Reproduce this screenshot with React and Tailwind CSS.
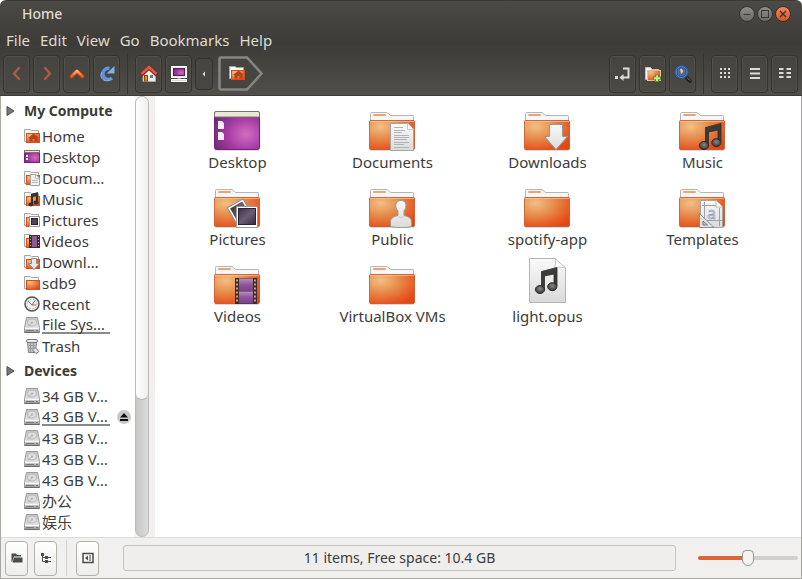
import React, { useState } from "react";

const places = [
  { name: "Home", kind: "home" },
  { name: "Desktop", kind: "desktop" },
  { name: "Docum…", kind: "documents" },
  { name: "Music", kind: "music" },
  { name: "Pictures", kind: "pictures" },
  { name: "Videos", kind: "videos" },
  { name: "Downl…", kind: "downloads" },
  { name: "sdb9", kind: "folder" },
  { name: "Recent", kind: "recent" },
  { name: "File Sys…", kind: "drive", mounted: true },
  { name: "Trash", kind: "trash" },
];

const devices = [
  { name: "34 GB V…", kind: "drive" },
  { name: "43 GB V…", kind: "drive", mounted: true, eject: true },
  { name: "43 GB V…", kind: "drive" },
  { name: "43 GB V…", kind: "drive" },
  { name: "43 GB V…", kind: "drive" },
  { name: "办公", kind: "drive" },
  { name: "娱乐", kind: "drive" },
];

const files = [
  { name: "Desktop", kind: "desktop" },
  { name: "Documents", kind: "documents" },
  { name: "Downloads", kind: "downloads" },
  { name: "Music", kind: "music" },
  { name: "Pictures", kind: "pictures" },
  { name: "Public", kind: "public" },
  { name: "spotify-app", kind: "folder" },
  { name: "Templates", kind: "templates" },
  { name: "Videos", kind: "videos" },
  { name: "VirtualBox VMs", kind: "folder" },
  { name: "light.opus", kind: "audio" },
];

// Gradients shared by all the icons
function IconDefs() {
  return (
    <svg className="absolute w-0 h-0" aria-hidden="true">
      <defs>
        <radialGradient id="orange" cx="0.25" cy="0.2" r="0.95">
          <stop offset="0" stopColor="#f2bf84" />
          <stop offset="0.45" stopColor="#e68a4a" />
          <stop offset="0.85" stopColor="#e85420" />
          <stop offset="1" stopColor="#dd4814" />
        </radialGradient>
        <radialGradient id="purple" cx="0.7" cy="0.6" r="0.8">
          <stop offset="0" stopColor="#d06fc0" />
          <stop offset="0.5" stopColor="#a83da4" />
          <stop offset="1" stopColor="#6a2a78" />
        </radialGradient>
        <linearGradient id="paper" x1="0" y1="0" x2="0" y2="1">
          <stop offset="0" stopColor="#fafafa" />
          <stop offset="1" stopColor="#dadada" />
        </linearGradient>
        <linearGradient id="photo" x1="0" y1="0" x2="1" y2="1">
          <stop offset="0" stopColor="#3a3142" />
          <stop offset="0.5" stopColor="#6d5d78" />
          <stop offset="1" stopColor="#352c3c" />
        </linearGradient>
        <linearGradient id="film" x1="0" y1="0" x2="0" y2="1">
          <stop offset="0" stopColor="#bb8fbd" />
          <stop offset="0.5" stopColor="#8c5597" />
          <stop offset="1" stopColor="#7d3f8c" />
        </linearGradient>
        <radialGradient id="note" cx="0.5" cy="0.4" r="0.6">
          <stop offset="0" stopColor="#8a8a8a" />
          <stop offset="1" stopColor="#333" />
        </radialGradient>
        <linearGradient id="metal" x1="0" y1="0" x2="0" y2="1">
          <stop offset="0" stopColor="#c4c4c4" />
          <stop offset="0.7" stopColor="#e2e2e2" />
          <stop offset="1" stopColor="#8f8f8f" />
        </linearGradient>
        <linearGradient id="arrow" x1="0" y1="0" x2="0" y2="1">
          <stop offset="0" stopColor="#ffb27d" />
          <stop offset="1" stopColor="#e65a1c" />
        </linearGradient>
      </defs>
    </svg>
  );
}

function Notes() {
  return (
    <g>
      <path d="M26.5 24.5L42 20.5V39H39V27L29.5 29V43H26.5Z" fill="#3b3b39" stroke="#2c2c2a" strokeWidth="0.8" />
      <ellipse cx="25" cy="42.5" rx="4.6" ry="4" fill="url(#note)" stroke="#2c2c2a" />
      <ellipse cx="37.3" cy="39.7" rx="4.6" ry="4" fill="url(#note)" stroke="#2c2c2a" />
    </g>
  );
}

const overlays = {
  documents: (
    <g>
      <path d="M21.5 20.5H39L44.5 26V47.5H21.5Z" fill="url(#paper)" stroke="#a5a5a5" />
      <path d="M38.5 20.5V26.5H44.5" fill="#fff" stroke="#c9c9c9" />
      <path d="M25 24.5H34M25 27.5H36M25 29.5H33M25 32.5H40M25 34.5H40M25 36.5H38M25 39.5H40M25 41.5H35M25 44.5H40" stroke="#b3b3b3" />
    </g>
  ),
  downloads: (
    <path d="M25.5 21.5H38.5V33.5H43.5L32 46.5L20.5 33.5H25.5Z" fill="url(#paper)" stroke="#989898" />
  ),
  music: <Notes />,
  pictures: (
    <g>
      <g transform="rotate(-30 25 31)">
        <rect x="16.5" y="22.5" width="18" height="18" fill="#fff" stroke="#8c8c8c" />
        <rect x="18.5" y="24.5" width="14" height="14" fill="url(#photo)" />
      </g>
      <rect x="22.5" y="26.5" width="21" height="21" fill="#fff" stroke="#9a9a9a" />
      <rect x="24.5" y="28.5" width="17" height="16" fill="url(#photo)" stroke="#2a2230" />
    </g>
  ),
  public: (
    <g fill="url(#paper)" stroke="#9a9a9a">
      <path d="M21.5 46.5V42C21.5 37 26 36.5 29 35.5V31C25.5 27 26 20.5 32 20.5S38 27 35 31V35.5C38 36.5 42.5 37 42.5 42V46.5C37 48 27 48 21.5 46.5Z" />
      <path d="M29 36C30.5 38 33.5 38 35 36" fill="none" stroke="#c5c5c5" />
    </g>
  ),
  templates: (
    <g>
      <path d="M21.5 20.5H37L43.5 27V47.5H21.5Z" fill="url(#paper)" stroke="#a5a5a5" />
      <path d="M37 20.5V27H43.5" fill="#fff" stroke="#bbb" />
      <path d="M25.5 22V38M40.5 28V46M23 25.5H37M28 40.5H43" stroke="#9f9fae" />
      <text x="28" y="39" fontFamily="Noto Sans" fontSize="16" fill="#dfe5ec" stroke="#8496b0" strokeWidth="0.6">a</text>
      <path d="M20.5 33.5V47.5H35Z" fill="#e3e3e3" stroke="#8b8b8b" />
      <path d="M24 41V45H28.5Z" fill="#c9c9c9" stroke="#777" />
    </g>
  ),
  videos: (
    <g>
      <rect x="21" y="21" width="22" height="26" fill="#35302f" />
      <rect x="25" y="21.5" width="14" height="12.5" fill="url(#film)" />
      <rect x="25" y="34.5" width="14" height="12" fill="url(#film)" />
      <path d="M23 22.5V46M41 22.5V46" stroke="#d39a72" strokeWidth="2" strokeDasharray="2 2" />
    </g>
  ),
};

function FileIcon({ kind }) {
  if (kind === "desktop") {
    return (
      <svg className="w-[47px] h-12" viewBox="0 0 47 48" aria-hidden="true">
        <rect x="1" y="46" width="44" height="2" fill="#000" opacity="0.12" />
        <rect x="0.5" y="8.5" width="45" height="38" rx="2" fill="url(#purple)" stroke="#6d2478" />
        <path d="M0.5 14V10Q0.5 8.5 2 8.5H44Q45.5 8.5 45.5 10V14Z" fill="#ebe9d5" stroke="#77756a" />
        <path d="M4 18H8L10 20V26H4ZM4 29H8L10 31V37H4Z" fill="#f1edf2" />
      </svg>
    );
  }
  if (kind === "audio") {
    return (
      <svg className="w-[47px] h-12" viewBox="0 0 47 48" aria-hidden="true">
        <path d="M5.5 1.5H31L41.5 11V45.5H5.5Z" fill="url(#paper)" stroke="#b4b4b4" />
        <path d="M31 1.5Q32.5 9 30 11Q36 9 41.5 11Z" fill="#fff" stroke="#c4c4c4" />
        <g transform="translate(-9 -10)">
          <Notes />
        </g>
      </svg>
    );
  }
  return (
    <svg className="w-[47px] h-12" viewBox="0 0 47 48" aria-hidden="true">
      <rect x="1" y="46" width="44" height="2" rx="1" fill="#000" opacity="0.15" />
      <path d="M1.5 20V10.5Q1.5 9.5 2.5 9.5H18L21.5 12.5H44Q44.5 12.5 44.5 13.5V20Z" fill="#f6f6f6" stroke="#b5b5b5" />
      <rect x="4" y="11" width="13" height="2" rx="1" fill="#eea27a" />
      <rect x="0.5" y="17.5" width="45" height="29" rx="1" fill="url(#orange)" stroke="#c8501f" strokeOpacity="0.8" />
      <path d="M1 18.5H45" stroke="#f7c9a0" opacity="0.7" />
      {overlays[kind]}
    </svg>
  );
}

const smallOverlays = {
  home: (
    <path d="M4 10L9.5 5.5L15 10H13.5V13.5H10.5V11H8.5V13.5H5.5V10Z" fill="#b8431a" />
  ),
  documents: (
    <g>
      <path d="M6.5 4.5H12L15.5 8V15.5H6.5Z" fill="#f1f1f1" stroke="#a0a0a0" />
      <path d="M11.5 5V8.5H15M8 10.5H14M8 12.5H14" fill="none" stroke="#bbb" />
    </g>
  ),
  music: (
    <g fill="#333">
      <path d="M7 3L14 1V12H12V5L9 6V14H7Z" />
      <ellipse cx="7" cy="13.5" rx="2.5" ry="2" />
      <ellipse cx="12" cy="11.5" rx="2.5" ry="2" />
    </g>
  ),
  pictures: (
    <g>
      <rect x="5.5" y="4.5" width="10" height="10" fill="#fff" stroke="#999" />
      <rect x="7.5" y="6.5" width="6" height="6" fill="#4d4458" stroke="#2b2433" />
    </g>
  ),
  videos: (
    <g>
      <rect x="5" y="2" width="11" height="13" fill="#37302f" />
      <rect x="8" y="3" width="5" height="11" fill="#8f5799" />
      <path d="M6.5 3V15M14.5 3V15" stroke="#d8a184" strokeDasharray="1 2" />
    </g>
  ),
  downloads: (
    <path d="M7.5 4.5H12.5V9.5H15.5L10 15.5L4.5 9.5H7.5Z" fill="#e9e9e9" stroke="#8d8d8d" />
  ),
};

function SmallIcon({ kind, ...props }) {
  const svg = { className: "w-4 h-4 shrink-0", viewBox: "0 0 16 16", "aria-hidden": true, ...props };
  if (kind === "desktop") {
    return (
      <svg {...svg}>
        <rect x="0.5" y="1.5" width="15" height="12" fill="url(#purple)" stroke="#6d2478" />
        <path d="M0.5 1.5H15.5V3.5H0.5Z" fill="#e9e6d3" stroke="#77756a" />
        <path d="M2 6H4V8H2ZM2 9H4V11H2Z" fill="#f4eef5" />
      </svg>
    );
  }
  if (kind === "drive") {
    return (
      <svg {...svg}>
        <path d="M2.5 0.5H13.5L15.5 10.5V15.5H0.5V10.5Z" fill="url(#metal)" stroke="#9c9c9c" />
        <ellipse cx="8" cy="5.5" rx="4.5" ry="3.5" fill="#dedede" stroke="#bababa" />
        <circle cx="8" cy="5.5" r="1" fill="#aaa" />
        <path d="M7.5 6L4 9.5" stroke="#b0b0b0" />
        <path d="M1 11.5H15" stroke="#fafafa" />
        <path d="M0.5 15.5H15.5" stroke="#6a6a6a" />
        <path d="M2 13.5H10M12 13.5H14" stroke="#7a7a7a" />
      </svg>
    );
  }
  if (kind === "recent") {
    return (
      <svg {...svg}>
        <circle cx="8" cy="8" r="7" fill="#f2f2f0" stroke="#555" strokeWidth="1.5" />
        <circle cx="8" cy="8" r="5" fill="none" stroke="#888" strokeDasharray="1 2" />
        <path d="M4 5L8 9L11 4.5" fill="none" stroke="#666" />
        <path d="M8 9H12" stroke="#d8592a" />
      </svg>
    );
  }
  if (kind === "trash") {
    return (
      <svg {...svg}>
        <path d="M3.5 4.5H12.5L11.5 14.5H4.5Z" fill="#c6c6c6" stroke="#858585" />
        <path d="M5 7.5H11M5 10.5H11M6.5 5V14M9.5 5V14" stroke="#999" />
        <rect x="2.5" y="1.5" width="11" height="3" rx="1.5" fill="#ededed" stroke="#777" />
        <path d="M8.5 12L11 9.5L15 13.5L12 15.5Z" fill="#e4e4e4" stroke="#808080" />
      </svg>
    );
  }
  return (
    <svg {...svg}>
      <path d="M0.5 13.5V1.5H6L7.5 2.5H14.5V13.5Z" fill="#fafafa" stroke="#a6a6a6" />
      <rect x="2.5" y="5.5" width="13" height="9" fill="url(#orange)" stroke="#cf5220" />
      {smallOverlays[kind]}
    </svg>
  );
}

function ToolButton({ label, children }) {
  return (
    <button
      aria-label={label}
      className="flex items-center justify-center w-[27px] h-[38px] rounded border border-[#34332f] bg-linear-to-b from-[#45443f] to-[#4a4943] shadow-[inset_0_0_0_1px_#504f49]"
    >
      <svg className="w-5 h-5" viewBox="0 0 20 20" fill="none">
        {children}
      </svg>
    </button>
  );
}

function ToolSeparator() {
  return <div className="w-px h-10 mx-1 bg-[#35342f]"></div>;
}

function Toolbar() {
  return (
    <div className="flex items-center justify-between pl-[3px] pr-1 h-[43px]">
      <div className="flex items-center gap-[3px]">
        <ToolButton label="Back">
          <path d="M12 4L7 9.5L12 15" stroke="#a85c43" strokeWidth="2.5" strokeLinecap="round" />
        </ToolButton>
        <ToolButton label="Forward">
          <path d="M8 4L13 9.5L8 15" stroke="#a85c43" strokeWidth="2.5" strokeLinecap="round" />
        </ToolButton>
        <ToolButton label="Up">
          <path d="M4.5 12.5L10 7L15.5 12.5" stroke="#b9390b" strokeWidth="4" strokeLinecap="round" strokeLinejoin="round" />
          <path d="M4.5 12.5L10 7L15.5 12.5" stroke="url(#arrow)" strokeWidth="2.5" strokeLinecap="round" strokeLinejoin="round" />
        </ToolButton>
        <ToolButton label="Reload">
          <path d="M15 14A5.5 5.5 0 1 1 12.5 4.5" stroke="#5b93dd" strokeWidth="3.5" />
          <path d="M17.5 2V9.5H9.5L17.5 2Z" fill="#7fb0ec" />
          <path d="M14 14.5A5.5 5.5 0 0 1 5 8" stroke="#8fbbf0" strokeWidth="1" />
        </ToolButton>
        <ToolSeparator />
        <ToolButton label="Home">
          <path d="M4 9L10 4L16.5 9V17.5H4Z" fill="#eeeeea" stroke="#aaa" />
          <path d="M2 11L10 3.5L18 11" stroke="#8f1f12" strokeWidth="4" />
          <path d="M2.5 10L10 3L17.5 10" stroke="#dc5a48" strokeWidth="2.5" />
          <rect x="5.5" y="11.5" width="3" height="5.5" fill="#e18b2c" stroke="#84480f" />
          <rect x="11" y="11" width="3" height="3" fill="#667b93" />
        </ToolButton>
        <ToolButton label="Computer">
          <rect x="2.5" y="2.5" width="15" height="11" fill="#eceae6" stroke="#fff" />
          <rect x="4.5" y="4.5" width="11" height="7" fill="url(#purple)" stroke="#5b1c63" />
          <path d="M8 14H12V15.5H8Z" fill="#999" />
          <rect x="2.5" y="15.5" width="15" height="2" fill="#d9d8d3" stroke="#fff" />
        </ToolButton>
        <button
          aria-label="Scroll path left"
          className="flex items-center justify-center w-[18px] h-8 rounded border border-[#34332f] bg-[#474640]"
        >
          <svg className="w-2 h-2" viewBox="0 0 8 8">
            <path d="M5 1.5V6.5L2.5 4Z" fill="#dfdbd2" />
          </svg>
        </button>
        <button aria-label="Home folder" className="ml-0.5">
          <svg className="w-[46px] h-[37px]" viewBox="0 0 46 37">
            <path d="M3 2.5H29L43.5 18.5L29 34.5H3Q1.5 34.5 1.5 33V4Q1.5 2.5 3 2.5Z" fill="#45443f" stroke="#858583" strokeWidth="2.5" />
            <SmallIcon kind="home" x="11" y="10" width="16" height="16" />
          </svg>
        </button>
      </div>
      <div className="flex items-center gap-[3px]">
        <ToolButton label="Enter location">
          <path d="M10 4.5H15.5V13.5H9" stroke="#dfdbd2" strokeWidth="2" />
          <path d="M10.5 10V17L6.5 13.5Z" fill="#dfdbd2" />
          <rect x="2" y="12" width="3" height="3" fill="#dfdbd2" />
        </ToolButton>
        <ToolButton label="New folder">
          <path d="M2.5 15.5V3.5H7.5L9 5.5H15.5V15.5Z" fill="#f6f6f6" stroke="#c0c0c0" />
          <rect x="4.5" y="6.5" width="13" height="10" fill="url(#orange)" stroke="#f5b590" />
          <path d="M14 10.5V18M10 14.3H18" stroke="#5f9420" strokeWidth="4" />
          <path d="M14 11.5V17M11 14.3H17" stroke="#c5e597" strokeWidth="2" />
        </ToolButton>
        <ToolButton label="Search">
          <path d="M13 13L17 17" stroke="#1d1d1d" strokeWidth="3.5" strokeLinecap="round" />
          <path d="M14 13.5L17 16.5" stroke="#888" strokeWidth="1" />
          <circle cx="8.5" cy="8" r="5.5" fill="#5d6a7c" stroke="#29549f" strokeWidth="3" />
          <circle cx="8.5" cy="8" r="5.5" stroke="#5287dc" strokeWidth="1" />
          <path d="M7 5Q10 4 10 8L8 10Z" fill="#c6ccd5" />
        </ToolButton>
        <ToolSeparator />
        <ToolButton label="Icon view">
          <path d="M5 5H15M5 9H15M5 13H15" stroke="#dfdbd2" strokeWidth="2" strokeDasharray="2 2" />
        </ToolButton>
        <ToolButton label="List view">
          <path d="M5 5H15M5 9.5H15M5 14H15" stroke="#dfdbd2" strokeWidth="2" />
        </ToolButton>
        <ToolButton label="Compact view">
          <path d="M4 5H8.5M11.5 5H16M4 9H8.5M11.5 9H16M4 13H8.5M11.5 13H16" stroke="#dfdbd2" strokeWidth="2" />
        </ToolButton>
      </div>
    </div>
  );
}

function WindowButton({ label, close, children }) {
  return (
    <button
      aria-label={label}
      className={`w-4 h-4 rounded-full border border-[#33322e] ${close ? "bg-linear-to-b from-[#f5855c] to-[#e0501f]" : "bg-linear-to-b from-[#8f8d86] to-[#6c6b65]"}`}
    >
      <svg viewBox="0 0 14 14" fill="none" stroke="#393833">
        {children}
      </svg>
    </button>
  );
}

function Header() {
  return (
    <header className="bg-linear-to-b from-[#4b4a45] via-[#3c3b37] via-45% to-[#504f48] border-t border-b border-[#3c3b37] rounded-t-md text-[#dfdbd2]">
      <div className="flex items-center justify-between h-[26px] pl-[22px] pr-[11px]">
        <h1 className="text-[14px] font-medium">Home</h1>
        <div className="flex gap-[2px]">
          <WindowButton label="Minimize">
            <path d="M3.5 7.5H10.5" />
          </WindowButton>
          <WindowButton label="Maximize">
            <rect x="3.5" y="3.5" width="7" height="7" />
          </WindowButton>
          <WindowButton label="Close" close>
            <path d="M4 4L10 10M10 4L4 10" strokeWidth="1.5" />
          </WindowButton>
        </div>
      </div>
      <nav className="flex items-center gap-[10px] h-[25px] px-[6px]">
        {["File", "Edit", "View", "Go", "Bookmarks", "Help"].map((item) => (
          <button key={item}>{item}</button>
        ))}
      </nav>
      <Toolbar />
    </header>
  );
}

function SidebarGroup({ title, items }) {
  return (
    <section>
      <h2 className="flex items-center h-7 pl-[5px] text-[14px] font-bold text-[#3c3b37]">
        <svg className="w-2.5 h-3 mr-2 shrink-0" viewBox="0 0 10 12">
          <path d="M1 1.5V10.5L8 6Z" fill="#777" stroke="#4d4d4d" />
        </svg>
        <span className="w-[89px] overflow-hidden whitespace-nowrap">{title}</span>
      </h2>
      <ul>
        {items.map((item, i) => (
          <li key={i} className="flex items-center h-[21px] pl-[23px] pr-1">
            <a href="#" className="flex items-center gap-[2px] grow">
              <SmallIcon kind={item.kind} />
              <span className={item.mounted ? "w-[68px] h-[19px] leading-[19px] border-b-2 border-[#8a8a88] whitespace-nowrap" : "whitespace-nowrap"}>
                {item.name}
              </span>
            </a>
            {item.eject && (
              <button aria-label="Eject" className="w-3.5 h-3.5 rounded-full bg-[#c9c9c7]">
                <svg viewBox="0 0 14 14">
                  <path d="M7 3L11 7.5H3ZM3 9H11V11H3Z" fill="#111" />
                </svg>
              </button>
            )}
          </li>
        ))}
      </ul>
    </section>
  );
}

function StatusButton({ label, children }) {
  return (
    <button
      aria-label={label}
      className="flex items-center justify-center w-[23px] h-[35px] rounded border border-[#b4b1ab] bg-linear-to-b from-white to-[#ededeb]"
    >
      <svg className="w-3 h-3" viewBox="0 0 12 12" fill="none">
        {children}
      </svg>
    </button>
  );
}

function StatusBar() {
  const [zoom, setZoom] = useState(50);

  return (
    <footer className="flex items-center h-[41px] pl-1 pr-[3px] border-t border-[#dcdad7] text-[14px]">
      <StatusButton label="Show places">
        <path d="M0.5 10V1.5H5L6 3H10V4.5H3L1 10Z" fill="#4c4c48" />
        <path d="M3 5.5H11.5V10.5H1.5Z" fill="#4c4c48" />
      </StatusButton>
      <div className="w-1.5"></div>
      <StatusButton label="Show treeview">
        <path d="M2.5 1V9.5H11M2.5 5.5H11" stroke="#4c4c48" />
        <path d="M1 1H4V4H1ZM5 4H8V7H5ZM5 8H8V11H5Z" fill="#4c4c48" />
      </StatusButton>
      <div className="w-px h-9 mx-[9px] bg-[#d5d3d0]"></div>
      <StatusButton label="Hide sidebar">
        <rect x="1" y="1.5" width="10" height="9" stroke="#4c4c48" strokeWidth="1.5" />
        <path d="M6 3.5V8.5L3 6ZM7.5 3H8.5V9H7.5Z" fill="#4c4c48" />
      </StatusButton>
      <div className="grow h-[26px] ml-6 mr-[22px] rounded-[3px] border border-[#c5c3bf] bg-[#efeeec] text-center leading-6">
        11 items, Free space: 10.4 GB
      </div>
      <input
        type="range"
        aria-label="Zoom"
        value={zoom}
        onChange={(e) => setZoom(e.target.value)}
        style={{ "--zoom": `${zoom}%` }}
        className="w-[100px] h-4 appearance-none bg-transparent [&::-webkit-slider-runnable-track]:h-1 [&::-webkit-slider-runnable-track]:rounded-full [&::-webkit-slider-runnable-track]:bg-[linear-gradient(to_right,#dd6436_var(--zoom),#d2d0cd_var(--zoom))] [&::-webkit-slider-thumb]:appearance-none [&::-webkit-slider-thumb]:w-3 [&::-webkit-slider-thumb]:h-4 [&::-webkit-slider-thumb]:-mt-1.5 [&::-webkit-slider-thumb]:rounded-t-[4px] [&::-webkit-slider-thumb]:rounded-b-[6px] [&::-webkit-slider-thumb]:border [&::-webkit-slider-thumb]:border-[#9a9893] [&::-webkit-slider-thumb]:bg-[#f4f3f2]"
      />
    </footer>
  );
}

export default function App() {
  return (
    <div className="flex flex-col h-screen font-['Noto_Sans','Noto_Sans_CJK_SC',sans-serif] text-[15px] leading-5 text-[#3c3c3c]">
      <IconDefs />
      <Header />
      <div className="flex flex-col grow min-h-0 border border-t-0 border-[#aaa8a2] bg-[#f1f0ee]">
        <div className="flex grow min-h-0">
          <aside className="flex flex-col gap-px w-[134px] shrink-0 pt-px bg-white overflow-hidden">
            <SidebarGroup title="My Computer" items={places} />
            <SidebarGroup title="Devices" items={devices} />
          </aside>
          <div className="w-3.5 shrink-0 rounded-full border border-[#bdbbb8] bg-linear-to-r from-[#c8c8c7] to-[#dadad9]">
            <div className="h-[69%] rounded-full bg-linear-to-r from-white to-[#ededec] border-b border-[#b5b3b0]"></div>
          </div>
          <main className="grow ml-1.5 pl-[5px] pt-[7px] bg-white overflow-hidden">
            <ul className="grid grid-cols-[repeat(auto-fill,155px)] gap-y-2">
              {files.map((file) => (
                <li key={file.name} className="flex flex-col items-center gap-px h-[69px]">
                  <FileIcon kind={file.kind} />
                  <span>{file.name}</span>
                </li>
              ))}
            </ul>
          </main>
        </div>
        <StatusBar />
      </div>
    </div>
  );
}
